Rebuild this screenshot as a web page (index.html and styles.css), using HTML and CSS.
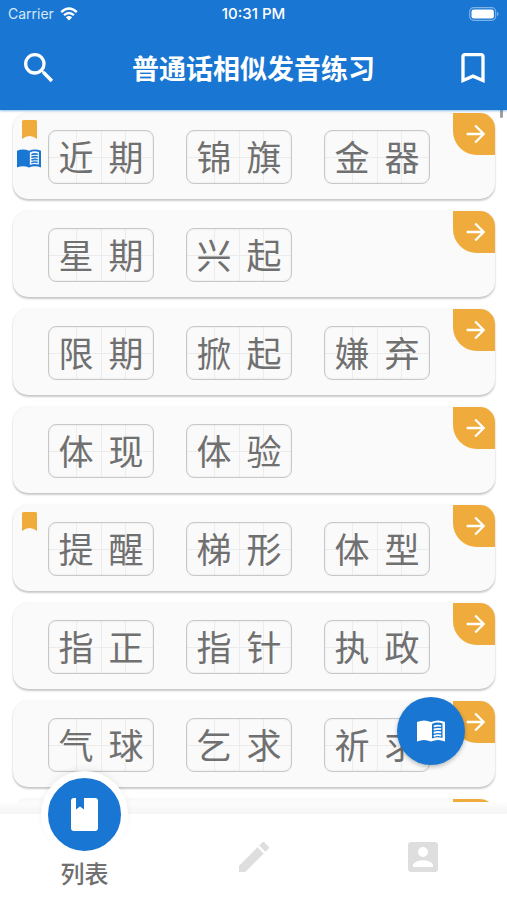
FILE: index.html
```html
<!DOCTYPE html>
<html lang="zh-CN">
<head>
<meta charset="utf-8">
<meta name="viewport" content="width=device-width, initial-scale=1">
<title>普通话相似发音练习</title>
<link rel="stylesheet" href="styles.css">
</head>
<body>
<svg class="sprite" aria-hidden="true">
  <symbol id="arrow" viewBox="0 0 24 24"><path d="M12 4l-1.400 1.400 5.600 5.600H4v2h12.200l-5.600 5.600L12 20l8-8z"/></symbol>
  <symbol id="flag" viewBox="0 0 15 19"><path d="M0 1.500Q0 0 1.500 0h12Q15 0 15 1.500V19Q7.500 13 0 19z"/></symbol>
  <symbol id="book" viewBox="0 0 28 22"><path d="M0 2Q7-1 14 2Q21-1 28 2V21.500Q21 18.500 14 21.500Q7 18.500 0 21.500z"/><path class="page" d="M15 4Q20 1.500 25.500 3.500V18Q20 16.500 15 18.500z"/><path class="lines" d="M16.700 6.500q3.500-1.500 7.500-.5M16.700 9.700q3.500-1.500 7.500-.5M16.700 12.900q3.500-1.500 7.500-.5M16.700 16.100q3.500-1.500 7.500-.5"/></symbol>
</svg>

<header class="header">
  <div class="status">
    <span class="carrier">Carrier
      <svg class="wifi" viewBox="0 0 18 14"><path d="M1.200 5.200Q9-2 16.800 5.200M4 8.200Q9 3.800 14 8.200"/><path class="dot" d="M9 13.500L5.800 10.200Q9 7.600 12.200 10.200z"/></svg>
    </span>
    <span class="clock">10:31 PM</span>
    <svg class="battery" viewBox="0 0 30 14"><rect class="shell" x=".7" y=".7" width="26" height="12.600" rx="4"/><rect class="charge" x="2.500" y="2.500" width="22.400" height="9" rx="2.300"/><path class="tip" d="M28 5v4q1.600-.6 1.600-2T28 5z"/></svg>
  </div>
  <div class="bar">
    <button class="icon-button" aria-label="搜索"><svg class="search" viewBox="3 3 18 18"><path d="M15.500 14h-.79l-.28-.27A6.471 6.471 0 0 0 16 9.500 6.500 6.500 0 1 0 9.500 16c1.610 0 3.090-.59 4.230-1.570l.27.28v.79l5 4.990L20.490 19l-4.990-5zm-6 0C7.010 14 5 11.990 5 9.500S7.010 5 9.500 5 14 7.010 14 9.500 11.990 14 9.500 14z"/></svg></button>
    <h1 class="title">普通话相似发音练习</h1>
    <button class="icon-button end" aria-label="书签"><svg class="saved" viewBox="5 3 14 18"><path d="M17 3H7c-1.100 0-2 .9-2 2v16l7-3 7 3V5c0-1.100-.9-2-2-2zm0 15l-5-2.180L7 18V5h10v13z"/></svg></button>
  </div>
</header>

<main class="list">
  <article class="card">
    <div class="marks"><svg class="flag"><use href="#flag"/></svg><svg class="book"><use href="#book"/></svg></div>
    <div class="words"><div class="word"><span>近</span><span>期</span></div><div class="word"><span>锦</span><span>旗</span></div><div class="word"><span>金</span><span>器</span></div></div>
    <button class="go" aria-label="打开"><svg><use href="#arrow"/></svg></button>
  </article>
  <article class="card">
    <div class="marks"></div>
    <div class="words"><div class="word"><span>星</span><span>期</span></div><div class="word"><span>兴</span><span>起</span></div></div>
    <button class="go" aria-label="打开"><svg><use href="#arrow"/></svg></button>
  </article>
  <article class="card">
    <div class="marks"></div>
    <div class="words"><div class="word"><span>限</span><span>期</span></div><div class="word"><span>掀</span><span>起</span></div><div class="word"><span>嫌</span><span>弃</span></div></div>
    <button class="go" aria-label="打开"><svg><use href="#arrow"/></svg></button>
  </article>
  <article class="card">
    <div class="marks"></div>
    <div class="words"><div class="word"><span>体</span><span>现</span></div><div class="word"><span>体</span><span>验</span></div></div>
    <button class="go" aria-label="打开"><svg><use href="#arrow"/></svg></button>
  </article>
  <article class="card">
    <div class="marks"><svg class="flag"><use href="#flag"/></svg></div>
    <div class="words"><div class="word"><span>提</span><span>醒</span></div><div class="word"><span>梯</span><span>形</span></div><div class="word"><span>体</span><span>型</span></div></div>
    <button class="go" aria-label="打开"><svg><use href="#arrow"/></svg></button>
  </article>
  <article class="card">
    <div class="marks"></div>
    <div class="words"><div class="word"><span>指</span><span>正</span></div><div class="word"><span>指</span><span>针</span></div><div class="word"><span>执</span><span>政</span></div></div>
    <button class="go" aria-label="打开"><svg><use href="#arrow"/></svg></button>
  </article>
  <article class="card">
    <div class="marks"></div>
    <div class="words"><div class="word"><span>气</span><span>球</span></div><div class="word"><span>乞</span><span>求</span></div><div class="word"><span>祈</span><span>求</span></div></div>
    <button class="go" aria-label="打开"><svg><use href="#arrow"/></svg></button>
  </article>
  <article class="card">
    <div class="marks"></div>
    <div class="words"></div>
    <button class="go" aria-label="打开"><svg><use href="#arrow"/></svg></button>
  </article>
  <div class="scrollbar"></div>
</main>

<footer class="footer">
  <button class="fab" aria-label="阅读"><svg class="book"><use href="#book"/></svg></button>
  <nav class="tabs">
    <a class="tab active" href="#list">
      <span class="bubble"><svg viewBox="0 0 27 33"><path d="M3 0H5V11.500L9 8.500 13 11.500V0H24Q27 0 27 3V30Q27 33 24 33H3Q0 33 0 30V3Q0 0 3 0z"/></svg></span>
      <span class="label">列表</span>
    </a>
    <a class="tab" href="#write" aria-label="练习"><svg viewBox="3 3 18 18"><path d="M3 17.250V21h3.750L17.810 9.940l-3.750-3.750L3 17.250zM20.710 7.040a1 1 0 0 0 0-1.410l-2.340-2.340a1 1 0 0 0-1.410 0l-1.830 1.830 3.750 3.750 1.830-1.830z"/></svg></a>
    <a class="tab" href="#me" aria-label="我的"><svg viewBox="3 3 18 18"><path d="M3 5v14a2 2 0 0 0 2 2h14a2 2 0 0 0 2-2V5a2 2 0 0 0-2-2H5a2 2 0 0 0-2 2zm12 4a3 3 0 1 1-6 0 3 3 0 0 1 6 0zm-9 8c0-2 4-3.100 6-3.100s6 1.100 6 3.100v1H6v-1z"/></svg></a>
  </nav>
</footer>
</body>
</html>
```
FILE: styles.css
```css
:root {
  --blue: #1976d2;
  --orange: #efab3b;
  --gray: #707070;
  --page: #fafafa;
}

* {
  box-sizing: border-box;
}

body {
  margin: 0;
  height: 100vh;
  display: flex;
  flex-direction: column;
  background: #fff;
  color: var(--gray);
  font-family: "Noto Sans CJK SC", sans-serif;
  overflow: hidden;
}

button {
  border: 0;
  padding: 0;
  background: none;
  color: inherit;
  display: grid;
  place-items: center;
}

svg {
  display: block;
  fill: currentColor;
}

.sprite {
  position: absolute;
  width: 0;
  height: 0;
}

/* Header */
.header {
  flex: none;
  background: var(--blue);
  color: #fff;
  box-shadow: 0 1px 2px rgba(25, 118, 210, 0.5);
  z-index: 1;
}

.status {
  display: grid;
  grid-template-columns: 1fr auto 1fr;
  align-items: center;
  height: 28px;
  padding: 0 8px;
  font: 14px/28px Inter, sans-serif;
}

.carrier {
  display: flex;
  align-items: center;
  gap: 6px;
  color: #d7e8fa;
}

.wifi {
  width: 18px;
  height: 14px;
  fill: none;
  stroke: #fff;
  stroke-width: 2.4;
}

.wifi .dot {
  fill: #fff;
  stroke: none;
}

.clock {
  font-size: 15px;
  font-weight: 500;
}

.battery {
  width: 30px;
  height: 14px;
  justify-self: end;
}

.shell {
  fill: none;
  stroke: #7fb2e6;
  stroke-width: 1.2;
}

.tip {
  fill: #7fb2e6;
}

.bar {
  display: grid;
  grid-template-columns: 1fr auto 1fr;
  align-items: center;
  height: 82px;
  padding-bottom: 2px;
}

.icon-button {
  width: 58px;
  height: 58px;
  margin-left: 10px;
}

.end {
  justify-self: end;
  margin: 0 5px 0 0;
}

.search {
  width: 30px;
  height: 30px;
}

.saved {
  width: 24px;
  height: 30px;
}

.title {
  margin: 0;
  font-size: 27px;
  line-height: 40px;
  font-weight: 700;
}

/* Word list */
.list {
  position: relative;
  flex: 1;
  min-height: 0;
  overflow: hidden;
  display: flex;
  flex-direction: column;
  gap: 12px;
  padding: 3px 12px 0 13px;
}

.card {
  flex: none;
  display: flex;
  align-items: flex-start;
  height: 86px;
  border-radius: 15px;
  background: #fafafa;
  box-shadow: 0 2px 2px rgba(0, 0, 0, 0.2), 0 0 2px rgba(0, 0, 0, 0.1);
}

.marks {
  flex: none;
  width: 35px;
  padding: 7px 4px;
  display: grid;
  gap: 10px;
}

.flag {
  width: 15px;
  height: 19px;
  margin-left: 5px;
  color: var(--orange);
}

.book {
  width: 24px;
  height: 19px;
  color: var(--blue);
}

/* The right-hand page takes the colour of the surface behind the book */
.page {
  fill: var(--page);
}

.lines {
  fill: none;
  stroke: currentColor;
  stroke-width: 1.8;
}

.words {
  flex: 1;
  display: flex;
  gap: 32px;
  padding-top: 17px;
}

.word {
  flex: none;
  display: flex;
  width: 106px;
  height: 54px;
  padding: 0 2px;
  border: 1px solid #c8c8c8;
  border-radius: 8px;
  box-shadow: inset 0 0 2px rgba(0, 0, 0, 0.12);
  background:
    linear-gradient(#ececec, #ececec) 50% 50% / 100% 1px no-repeat,
    linear-gradient(#ececec, #ececec) 50% 50% / 1px 100% no-repeat,
    linear-gradient(#ececec, #ececec) 26% 50% / 1px 100% no-repeat,
    linear-gradient(#ececec, #ececec) 74% 50% / 1px 100% no-repeat,
    #fafafa;
}

.word span {
  flex: 1;
  text-align: center;
  font-size: 35px;
  line-height: 50px;
}

.go {
  flex: none;
  width: 42px;
  height: 42px;
  border-radius: 0 15px 0 24px;
  background: var(--orange);
  color: #fff;
}

.go svg {
  width: 28px;
  height: 28px;
  margin-left: 3px;
}

.scrollbar {
  position: absolute;
  top: 0;
  right: 4px;
  width: 3px;
  height: 8px;
  border-radius: 0 0 2px 2px;
  background: #a0a0a0;
}

/* Bottom navigation */
.footer {
  position: relative;
  flex: none;
  padding-top: 12px;
  background: linear-gradient(#fdfdfd, #f5f5f5 12px, #fff 12px);
}

.fab {
  --page: var(--blue);
  position: absolute;
  right: 42px;
  bottom: 135px;
  width: 68px;
  height: 68px;
  border-radius: 50%;
  background: var(--blue);
  color: #fff;
  box-shadow: 0 2px 4px rgba(0, 0, 0, 0.25);
}

.fab .book {
  width: 28px;
  height: 22px;
  color: #fff;
}

.tabs {
  display: grid;
  grid-template-columns: repeat(3, 1fr);
  height: 86px;
}

.tab {
  display: grid;
  place-items: center;
  color: #dedede;
  text-decoration: none;
}

.tab > svg {
  width: 30px;
  height: 30px;
}

.active {
  align-content: start;
  color: var(--gray);
}

.bubble {
  display: grid;
  place-items: center;
  width: 87px;
  height: 87px;
  margin-top: -43px;
  border: 7px solid #fff;
  border-radius: 50%;
  background: var(--blue);
  color: #fff;
  box-shadow: 0 -3px 6px rgba(0, 0, 0, 0.05);
}

.bubble svg {
  width: 27px;
  height: 33px;
}

.label {
  font-size: 24px;
  line-height: 30px;
  font-weight: 500;
}
```
